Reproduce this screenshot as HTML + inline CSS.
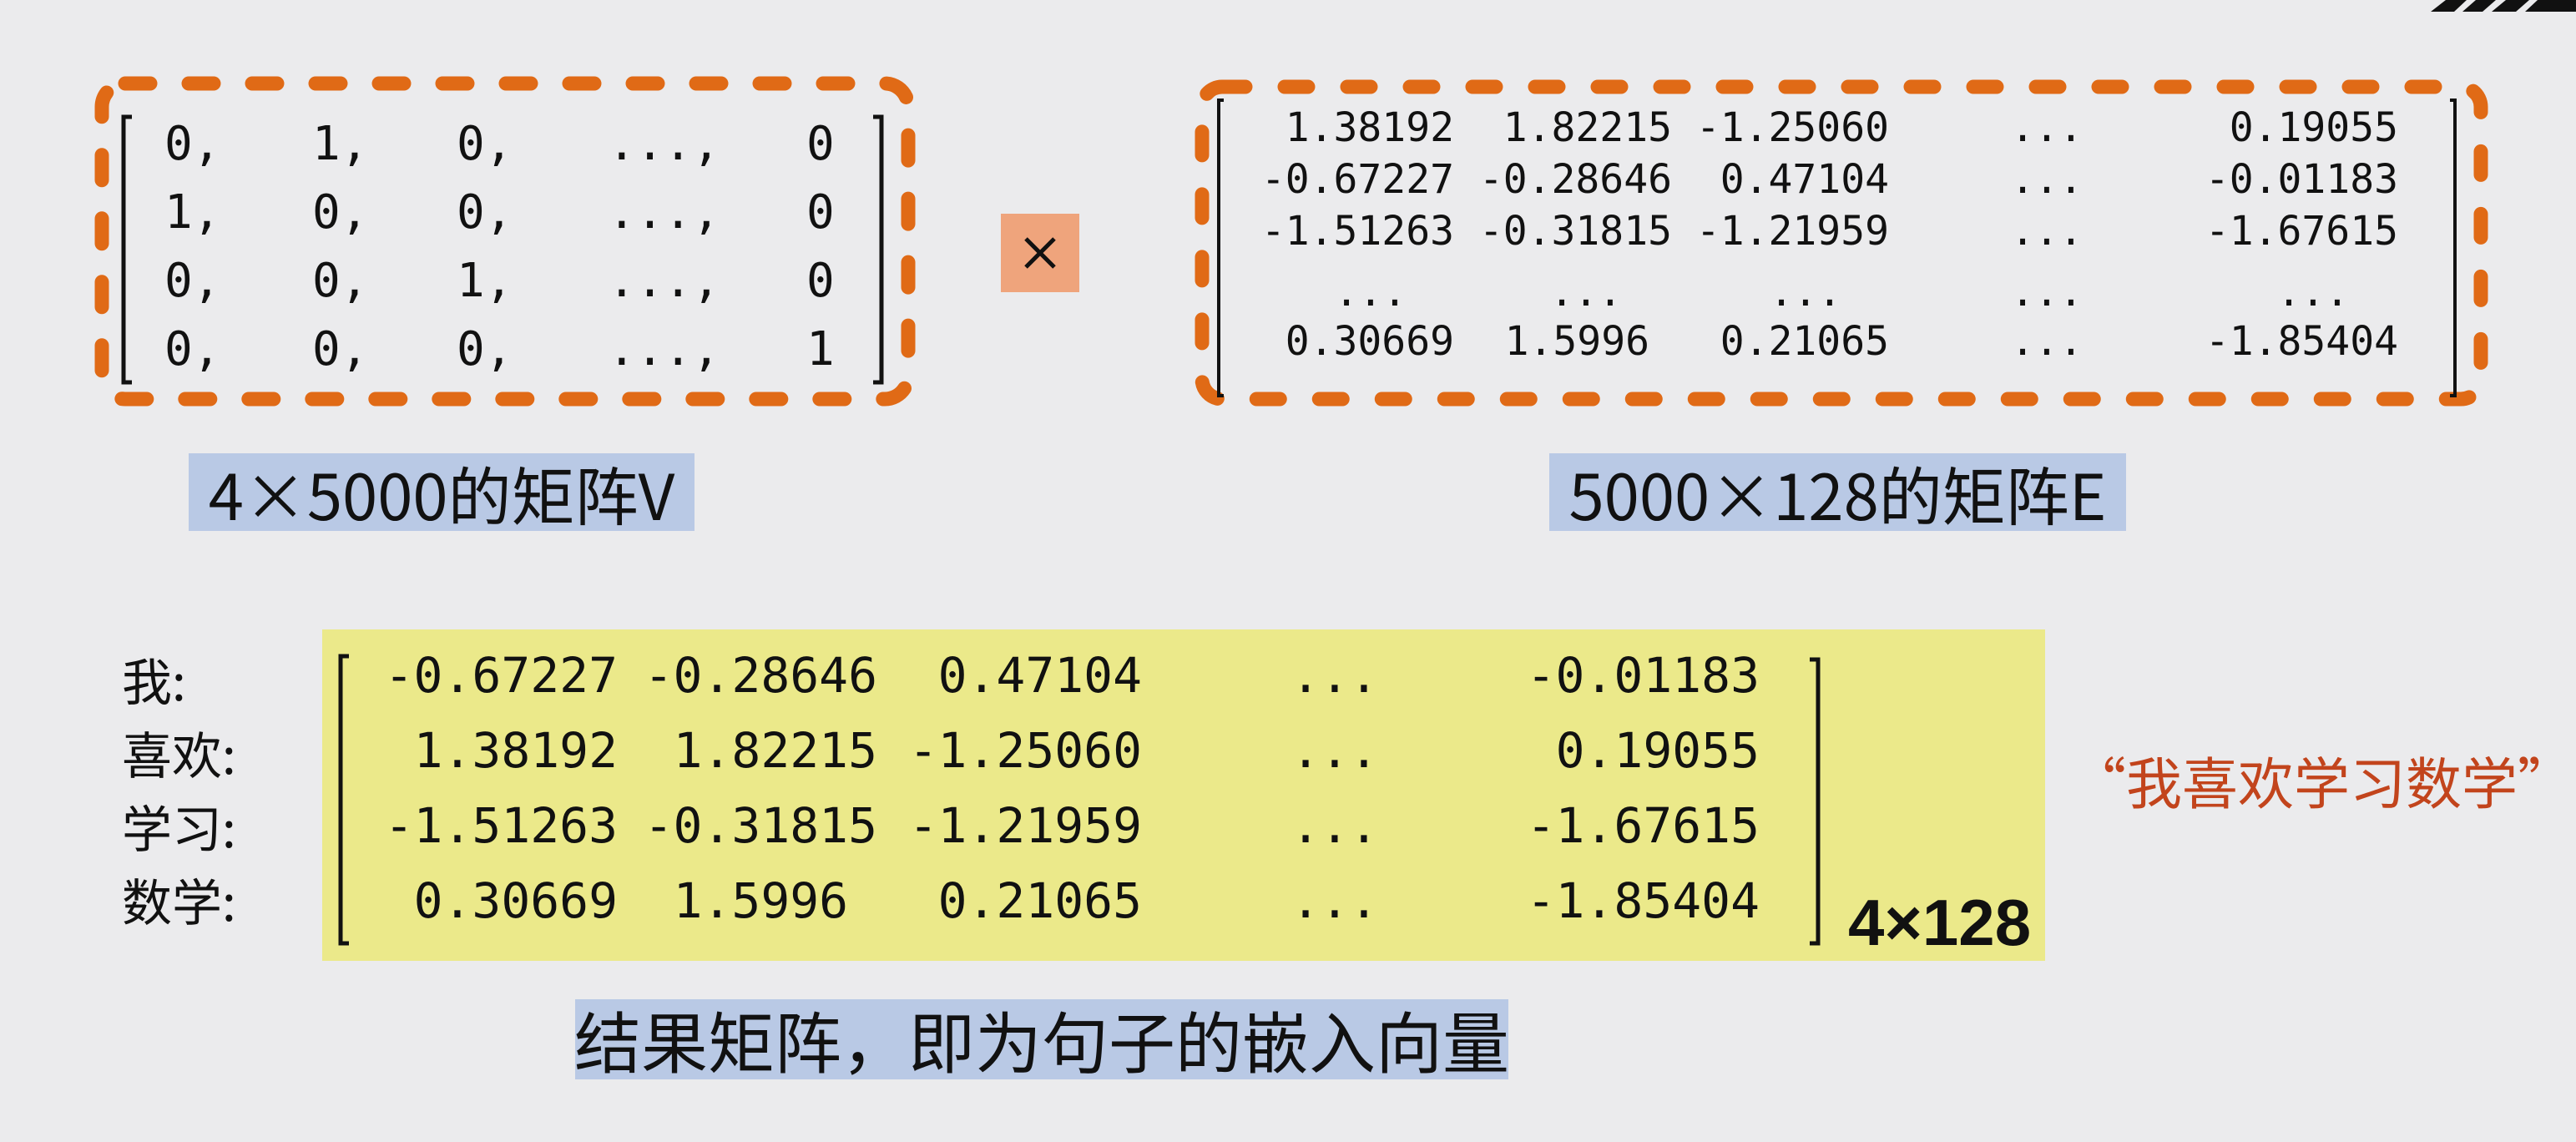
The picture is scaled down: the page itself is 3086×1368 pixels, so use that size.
<!DOCTYPE html>
<html><head><meta charset="utf-8"><style>
html,body{margin:0;padding:0}
body{width:3086px;height:1368px;background:#ebebed;position:relative;overflow:hidden;font-family:"Liberation Sans","Noto Sans CJK SC",sans-serif;color:#111}
.a{position:absolute;white-space:pre}
.m{font-family:"DejaVu Sans Mono","Liberation Mono",monospace}
.lbl{position:absolute;background:#b9c9e5;display:flex;align-items:center;justify-content:center;font-family:"Noto Sans CJK SC",sans-serif;color:#111;white-space:nowrap}
.L div{position:absolute;font-size:56px;line-height:82px;white-space:pre}
.R div{position:absolute;font-size:48px;line-height:62px;white-space:pre;text-align:right}
.Y div{position:absolute;font-size:58px;line-height:90px;white-space:pre;text-align:right}
.c{text-align:center!important}
</style></head><body>
<svg class="a" style="left:0;top:0" width="3086" height="1368">
 <rect x="122" y="100" width="966" height="378" rx="28" fill="none" stroke="#e06a16" stroke-width="17" stroke-linecap="round" stroke-dasharray="30 46"/>
 <rect x="1440" y="104" width="1532" height="374" rx="24" fill="none" stroke="#e06a16" stroke-width="17" stroke-linecap="round" stroke-dasharray="28 47"/>
 <path d="M158 140 H148 V458 H158" fill="none" stroke="#111" stroke-width="5"/>
 <path d="M1046 140 H1056 V458 H1046" fill="none" stroke="#111" stroke-width="5"/>
 <path d="M1466 120 H1460 V474 H1466" fill="none" stroke="#111" stroke-width="4"/>
 <path d="M2935 120 H2941 V474 H2935" fill="none" stroke="#111" stroke-width="4"/>
 <rect x="1199" y="256" width="94" height="94" fill="#efa47c"/>
 <path d="M1229 286 L1263 320 M1263 286 L1229 320" stroke="#111" stroke-width="5"/>
 <rect x="386" y="754" width="2064" height="397" fill="#ebe98a"/>
 <path d="M418 786 H408 V1130 H418" fill="none" stroke="#111" stroke-width="5"/>
 <path d="M2168 790 H2178 V1130 H2168" fill="none" stroke="#111" stroke-width="5"/>
 <path d="M2912 14 L2930 0 H2955 L2940 14 Z M2950 14 L2966 0 H2990 L2974 14 Z M2985 14 L3002 0 H3030 L3014 14 Z M3025 14 L3040 0 H3086 V14 Z" fill="#111"/>
</svg>

<div class="L m">
<div style="left:197px;top:132px">0,
1,
0,
0,</div>
<div style="left:374px;top:132px">1,
0,
0,
0,</div>
<div style="left:547px;top:132px">0,
0,
1,
0,</div>
<div style="left:728px;top:132px">...,
...,
...,
...,</div>
<div style="left:966px;top:132px">0
0
0
1</div>
</div>

<div class="R m">
<div style="right:1344px;top:122px"> 1.38192
-0.67227
-1.51263</div>
<div style="right:1083px;top:122px">1.82215
-0.28646
-0.31815</div>
<div style="right:823px;top:122px">-1.25060
0.47104
-1.21959</div>
<div class="c" style="left:2402px;width:100px;top:122px">...
...
...</div>
<div style="right:213px;top:122px">0.19055
-0.01183
-1.67615</div>
<div class="c" style="left:1592px;width:100px;top:319px">...</div>
<div class="c" style="left:1850px;width:100px;top:319px">...</div>
<div class="c" style="left:2113px;width:100px;top:319px">...</div>
<div class="c" style="left:2402px;width:100px;top:319px">...</div>
<div class="c" style="left:2721px;width:100px;top:319px">...</div>
<div style="right:1344px;top:378px">0.30669</div>
<div style="right:1110px;top:378px">1.5996</div>
<div style="right:823px;top:378px">0.21065</div>
<div class="c" style="left:2402px;width:100px;top:378px">...</div>
<div style="right:213px;top:378px">-1.85404</div>
</div>

<div class="lbl" style="left:226px;top:543px;width:606px;height:93px;font-size:76px">4×5000的矩阵V</div>
<div class="lbl" style="left:1856px;top:543px;width:691px;height:93px;font-size:76px">5000×128的矩阵E</div>

<div class="a" style="left:146px;top:770px;font-size:60px;line-height:88px;font-family:'Noto Sans CJK SC',sans-serif">我:
喜欢:
学习:
数学:</div>

<div class="Y m">
<div style="right:2346px;top:764px">-0.67227
1.38192
-1.51263
0.30669</div>
<div style="right:2035px;top:764px">-0.28646
1.82215
-0.31815
1.5996 </div>
<div style="right:1718px;top:764px">0.47104
-1.25060
-1.21959
0.21065</div>
<div class="c" style="left:1539px;width:120px;top:764px">...
...
...
...</div>
<div style="right:978px;top:764px">-0.01183
0.19055
-1.67615
-1.85404</div>
</div>

<div class="a" style="left:2214px;top:1060px;font-size:78px;font-weight:bold;line-height:90px">4×128</div>
<div class="a" style="left:2480px;top:892px;font-size:67px;line-height:86px;color:#c2441c;font-family:'Noto Sans CJK SC',sans-serif">“我喜欢学习数学”</div>

<div class="lbl" style="left:689px;top:1197px;width:1118px;height:96px;font-size:80px">结果矩阵，即为句子的嵌入向量</div>
</body></html>
